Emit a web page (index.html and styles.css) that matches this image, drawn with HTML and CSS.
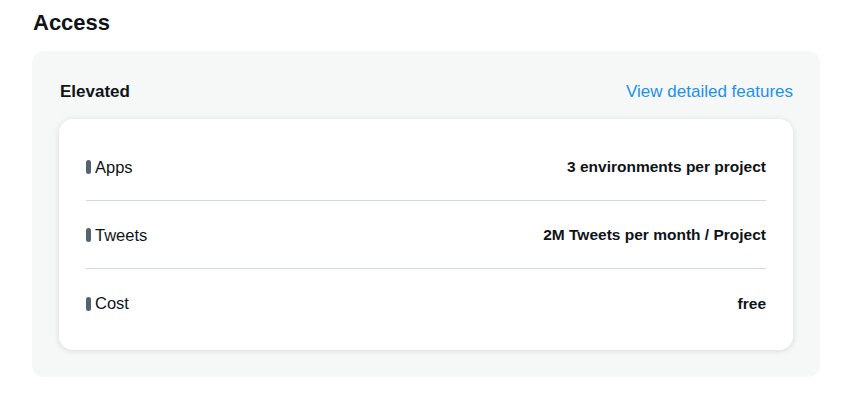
FILE: index.html
```html
<!DOCTYPE html>
<html>
<head>
<meta charset="utf-8">
<link rel="stylesheet" href="styles.css">
</head>
<body>
<section class="access">
  <h2 class="title">Access</h2>
  <div class="panel">
    <div class="panel-head">
      <span class="tier">Elevated</span>
      <a class="link" href="#">View detailed features</a>
    </div>
    <div class="card">
      <div class="row">
        <span class="label"><span class="mark"></span>Apps</span>
        <span class="value">3 environments per project</span>
      </div>
      <div class="row">
        <span class="label"><span class="mark"></span>Tweets</span>
        <span class="value">2M Tweets per month / Project</span>
      </div>
      <div class="row">
        <span class="label"><span class="mark"></span>Cost</span>
        <span class="value">free</span>
      </div>
    </div>
  </div>
</section>
</body>
</html>
```
FILE: styles.css
```css
* { box-sizing: border-box; }
body {
  margin: 0;
  background: #ffffff;
  font-family: "Liberation Sans", Arial, sans-serif;
  color: #0f1419;
}
.access {
  padding: 8px 28px 0 32px;
}
.title {
  margin: 0 0 14px 1px;
  font-size: 22px;
  line-height: 29px;
  font-weight: 700;
}
.panel {
  background: #f6f8f8;
  border-radius: 12px;
  padding: 26px 27px 27px 27px;
}
.panel-head {
  display: flex;
  justify-content: space-between;
  align-items: center;
  height: 30px;
  margin-bottom: 12px;
}
.tier {
  font-size: 17px;
  font-weight: 700;
  margin-left: 1px;
}
.link {
  color: #1d90f0;
  text-decoration: none;
  font-size: 17px;
}
.card {
  background: #ffffff;
  border-radius: 14px;
  padding: 14px 27px 13px 27px;
  box-shadow: 0 1px 6px rgba(0, 0, 0, 0.12);
}
.row {
  display: flex;
  justify-content: space-between;
  align-items: center;
  height: 68px;
  padding-top: 1px;
  border-bottom: 1px solid #cfd9de;
}
.row:last-child { border-bottom: none; }
.label {
  display: flex;
  align-items: center;
  font-size: 16.5px;
}
.mark {
  display: inline-block;
  width: 5px;
  height: 14px;
  border-radius: 2.5px;
  background: #536471;
  margin-right: 4px;
}
.value {
  font-size: 15.5px;
  font-weight: 700;
}
```
